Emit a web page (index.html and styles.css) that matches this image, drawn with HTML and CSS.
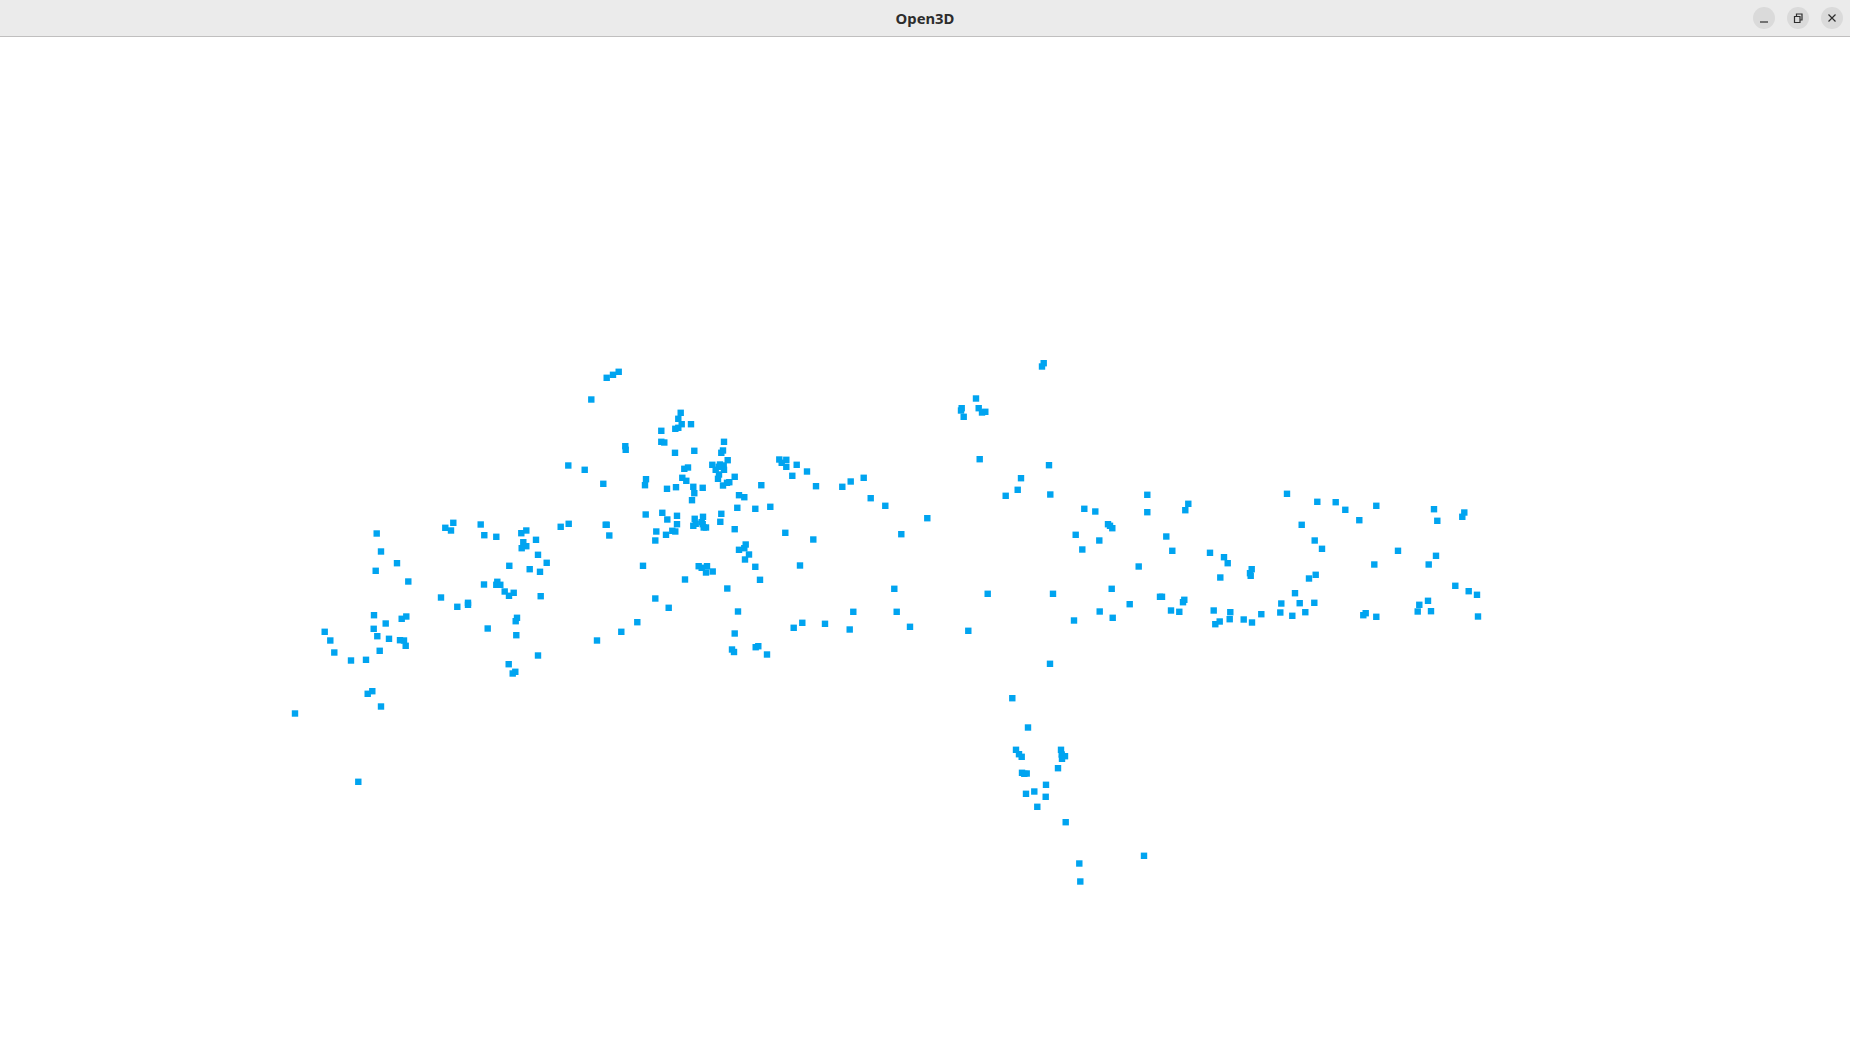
FILE: index.html
```html
<!DOCTYPE html>
<html lang="en">

<head>
  <meta charset="utf-8" />
  <title>Open3D</title>
  <link rel="stylesheet" href="styles.css">
</head>

<body>
  <div id="window">
    <header id="titlebar">
      <span></span>
      <h1 id="title">Open3D</h1>
      <div id="controls">
        <div class="winbtn">
          <svg viewBox="0 0 16 16"><path d="M4 12h8" /></svg>
        </div>
        <div class="winbtn">
          <svg viewBox="0 0 16 16"><path d="M4.5 6.5h5.5v6h-5.5z M6.5 6.5v-2.5h5.5v6h-2" /></svg>
        </div>
        <div class="winbtn">
          <svg viewBox="0 0 16 16"><path d="M4.5 4.5l7 7 M11.5 4.5l-7 7" /></svg>
        </div>
      </div>
    </header>
    <svg id="cloud" viewBox="0 37 1850 1016"></svg>
  </div>

  <script>
    // point cloud, window coordinates of each point's centre
    const points = [
      [376.7,534],[381,552],[397,563.7],[375.7,571.3],[408.3,582],[374,615.7],[385.7,624],[401.7,619.3],[406.3,617],
      [373.7,629.3],[377.3,636.7],[389,639.3],[400,640.7],[404,641],[405.7,646.3],[379.7,651.3],[324.7,632.3],
      [330.3,641],[334.3,653],[351,661],[366,660.3],[372.3,691.7],[367.7,694.3],[381,707],[295,714],[358.3,782.3],
      [445.3,528.3],[453.3,523.3],[451,531],[480.7,525],[484.3,535.7],[496.3,537.3],[521.3,533.7],[526.3,531],
      [536,540.3],[560.7,527.3],[568.7,524.3],[523.3,542.7],[526.3,546.7],[521.7,548.7],[538,555.3],[546.7,563.3],
      [509.3,566.3],[529.7,569.7],[540,572.3],[484,585],[497.3,582.3],[496.3,585.3],[500.3,585.3],[504.7,592],
      [509,596.3],[513.7,593.3],[540.7,596.7],[441,598],[457.3,607.3],[468,603.3],[468,605.3],[517,618.3],
      [515.7,621.7],[487.7,629],[516.3,635.7],[538,656],[508.7,664.7],[515.3,672.3],[512.7,674],

      [618.7,372.3],[613,375.3],[606.7,378.3],[591.3,400],[680.7,413.3],[678.3,419.3],[681.7,424.7],[691,424.7],
      [678.3,428.3],[675.3,429.3],[661.3,431.3],[661.3,442.3],[664.3,443],[625.3,446.7],[625.7,450.3],[675,453.3],
      [694.3,451.3],[724,442.3],[723,451],[721.3,453.3],[727.7,460.7],[712.3,465.3],[720,465],[723.7,466],
      [718.7,467.3],[715.7,470.3],[724,470.3],[719,475],[718,479.3],[734.7,477.3],[729.3,482.7],[727,483.3],
      [723,486],[688,468],[684.3,469.3],[682.3,478.3],[686.3,481.3],[693.3,487.3],[702.7,488.3],[694.3,493.7],
      [692,500.7],[676,487.7],[667,489.3],[646,479.7],[645,485.7],[568.3,466],[584.7,470.3],[603.3,484.3],
      [761.3,485.7],[779.3,460],[786.3,460.3],[781.7,463.3],[786.3,467.3],[796.7,465.3],[807,472],[792.3,476.3],
      [816,486.7],[842.3,487.3],[850.7,482],[739,495.7],[744.3,497.7],[737.3,508.3],[755.3,509.3],[770.3,507.3],
      [645.7,515],[662.3,513.3],[667.3,520],[677,516.3],[677,524.7],[656.3,532],[666,535.3],[672.3,531.3],
      [675.3,532],[655.3,541],[694.7,519.3],[703,517.3],[695.7,524.3],[693.3,526.3],[701.7,522.7],[702.7,524.7],
      [703.7,528],[706,528],[721.3,514.3],[720.3,522.3],[734.7,529.7],[785.3,533.3],[813.3,540],[745.7,545],
      [744.3,548.7],[739,550.3],[749,555],[745,560],[755.3,567.3],[760,580.3],[800,566],[643,566.3],[698.7,566.7],
      [701.7,568.3],[707,566.7],[706,573],[712.7,572],[685,580],[727.3,589],[655.3,599],[668.7,608.3],[738,612],
      [853.3,612.3],[637.3,622.7],[621.3,632.3],[597,641],[734.7,634],[793.7,628.3],[802.3,623.3],[825,624.3],
      [849.7,630],[732,650],[734,652.5],[755.7,647.7],[758.3,646.7],[767,655],[605.7,525.3],[606.7,525.3],[609.3,536],

      [1043.7,363.7],[1042,367],[976,399],[961.7,408.7],[961,411],[963.7,417.3],[978.7,408.7],[982,413],[985.3,412.3],
      [979.7,459.7],[1049,465.7],[1021,478.7],[1017.7,490.3],[1005.7,496.3],[1050.3,495],[863.7,478.3],[870.7,498.7],
      [885.3,506.3],[927.3,518.7],[901.3,534.7],[894.3,589.3],[896.7,612.3],[910,627.3],[968.3,631.3],[987.7,594.3],
      [1053,594.3],[1084.3,509.3],[1095.3,512],[1108,524.7],[1110,526.3],[1112.3,528.7],[1075.7,535.3],[1099.3,541],
      [1082.3,550],[1138.7,567],[1111.7,589.3],[1129.7,604.7],[1099.7,612],[1112.7,618.3],[1074,621],[1147.3,495.3],
      [1147.3,512.7],[1160,597.3],[1050,664.3],

      [1012.3,698.7],[1028,728],[1016,750.3],[1019,754.7],[1021.7,757.3],[1061,750.3],[1061.7,755],[1065,756.7],
      [1062,759.3],[1058,768.7],[1022,773.3],[1024.3,774.3],[1026.7,774],[1046,785.3],[1034.3,792],[1026,794.3],
      [1045.7,797.3],[1037.3,807.3],[1065.7,822.7],[1144,856.3],[1079.3,864],[1080.3,882],

      [1287,494.3],[1317.3,502.3],[1335.7,502.7],[1345.3,510.3],[1301.7,525.3],[1314.7,541],[1322,549.3],[1188.3,504.3],
      [1185.3,510.7],[1166.3,537],[1172.3,551.3],[1210,553.3],[1224,557.7],[1227.7,563.7],[1251.7,569.7],[1250,573.7],
      [1250.7,576.3],[1220.3,578],[1315.7,575.3],[1309,579],[1295,593.7],[1281.3,604],[1299.7,603.7],[1314.3,603.3],
      [1280.3,613],[1292.3,616.3],[1305.3,612.7],[1162,597.3],[1184.3,600.3],[1183,602.7],[1171,611],[1179.3,612.3],
      [1213.7,611],[1230.3,612.7],[1229.7,619.7],[1219.7,622],[1215.3,624.7],[1243.7,620],[1252,623],[1261.3,614.7],
      [1359.3,520.7],[1376.3,506.3],[1398,551.3],[1374.3,565],[1434,509.7],[1437.3,521.3],[1464.3,513],[1462.3,517.3],
      [1436,556.3],[1428.7,565],[1455.3,586.3],[1468.7,591.7],[1477,595.3],[1428,601.3],[1419.3,605.3],[1417.7,612],
      [1431,611.7],[1365.7,613.7],[1363.3,615.7],[1376.3,617.3],[1478,617]
    ];

    const cloud = document.querySelector('#cloud');

    points.forEach(([x, y]) => {
      const dot = document.createElementNS('http://www.w3.org/2000/svg', 'rect');
      dot.setAttribute('x', x - 3.2);
      dot.setAttribute('y', y - 3.7);
      dot.setAttribute('width', 6.4);
      dot.setAttribute('height', 6.4);
      cloud.appendChild(dot);
    });
  </script>
</body>

</html>
```

FILE: styles.css
```css
html,
body {
  margin: 0px;
  height: 100%;
  background: #fff;
}

#window {
  display: flex;
  flex-direction: column;
  height: 100vh;
  overflow: hidden;
}

#titlebar {
  display: grid;
  grid-template-columns: 1fr auto 1fr;
  align-items: center;
  flex: none;
  box-sizing: border-box;
  height: 37px;
  padding-bottom: 1px;
  background: #ebebeb;
  border-bottom: 1px solid #c0bfbf;
}

#title {
  margin: 0;
  font: bold 14.8px "Noto Sans", "Open Sans", sans-serif;
  color: #2d2d2d;
}

#controls {
  display: flex;
  justify-content: flex-end;
  gap: 12px;
  margin-right: 7px;
}

.winbtn {
  display: flex;
  align-items: center;
  justify-content: center;
  width: 22px;
  height: 22px;
  border-radius: 50%;
  background: #dadada;
}

.winbtn svg {
  width: 16px;
  height: 16px;
}

.winbtn path {
  fill: none;
  stroke: #2d2d2d;
  stroke-width: 1.2;
}

#cloud {
  display: block;
  flex: 1;
  width: 100%;
  min-height: 0;
}

#cloud rect {
  fill: #00a4f0;
}
```
